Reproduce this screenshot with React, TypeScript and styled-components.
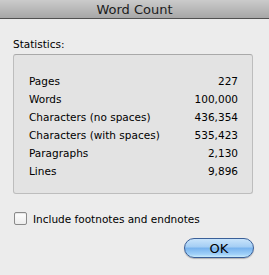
import styled, { createGlobalStyle } from "styled-components";

const GlobalStyle = createGlobalStyle`
  html, body {
    margin: 0;
    padding: 0;
    background: #ececec;
  }
  body {
    font-family: "DejaVu Sans", Verdana, sans-serif;
    -webkit-font-smoothing: antialiased;
  }
`;

const Window = styled.div`
  width: 269px;
  height: 275px;
  display: flex;
  flex-direction: column;
  background: #ececec;
  color: #000;
  overflow: hidden;
`;

const TitleBar = styled.div`
  height: 18px;
  flex: none;
  display: flex;
  align-items: center;
  justify-content: center;
  background: linear-gradient(#cbcbcb, #a7a7a7);
  border-bottom: 1px solid #515151;
  font-size: 13px;
  color: #1c1c1c;
`;

const Body = styled.div`
  display: flex;
  flex-direction: column;
  padding: 0 16px 0 13px;
`;

const Label = styled.div`
  font-size: 10.5px;
  height: 13px;
  line-height: 13px;
  margin-top: 19px;
  margin-bottom: 3px;
`;

const StatsBox = styled.div`
  background: #e3e3e3;
  border: 1px solid #bdbdbd;
  border-top-color: #a9a9a9;
  border-radius: 3px;
  padding: 17px 14px 13px 15px;
  display: flex;
  flex-direction: column;
`;

const Row = styled.div`
  height: 18px;
  display: flex;
  align-items: center;
  justify-content: space-between;
  font-size: 10.5px;
`;

const CheckRow = styled.label`
  display: flex;
  align-items: center;
  gap: 6px;
  margin-top: 18px;
  margin-left: 1px;
  font-size: 10.5px;
  height: 13px;
`;

const CheckBox = styled.span`
  width: 11px;
  height: 11px;
  border: 1px solid #8a8a8a;
  border-radius: 2px;
  background: linear-gradient(#ffffff, #ececec);
  box-shadow: inset 0 1px 1px rgba(0, 0, 0, 0.1);
`;

const Footer = styled.div`
  display: flex;
  justify-content: flex-end;
  margin-top: 13px;
`;

const OkButton = styled.button`
  width: 70px;
  height: 20px;
  border-radius: 10px;
  border: 1px solid #3a5f98;
  background: linear-gradient(
    #c8e4fb 0%,
    #a3cdf4 45%,
    #76b2ee 50%,
    #9fd0f8 85%,
    #c9ecfc 100%
  );
  box-shadow: 0 1px 1px rgba(0, 0, 0, 0.25);
  font-family: "DejaVu Sans", Verdana, sans-serif;
  font-size: 13px;
  color: #000;
  padding: 0;
  margin-right: -1px;
`;

const stats = [
  ["Pages", "227"],
  ["Words", "100,000"],
  ["Characters (no spaces)", "436,354"],
  ["Characters (with spaces)", "535,423"],
  ["Paragraphs", "2,130"],
  ["Lines", "9,896"],
];

export default function App() {
  return (
    <>
      <GlobalStyle />
      <Window>
        <TitleBar>Word Count</TitleBar>
        <Body>
          <Label>Statistics:</Label>
          <StatsBox>
            {stats.map(([name, value]) => (
              <Row key={name}>
                <span>{name}</span>
                <span>{value}</span>
              </Row>
            ))}
          </StatsBox>
          <CheckRow>
            <CheckBox />
            Include footnotes and endnotes
          </CheckRow>
          <Footer>
            <OkButton>OK</OkButton>
          </Footer>
        </Body>
      </Window>
    </>
  );
}
